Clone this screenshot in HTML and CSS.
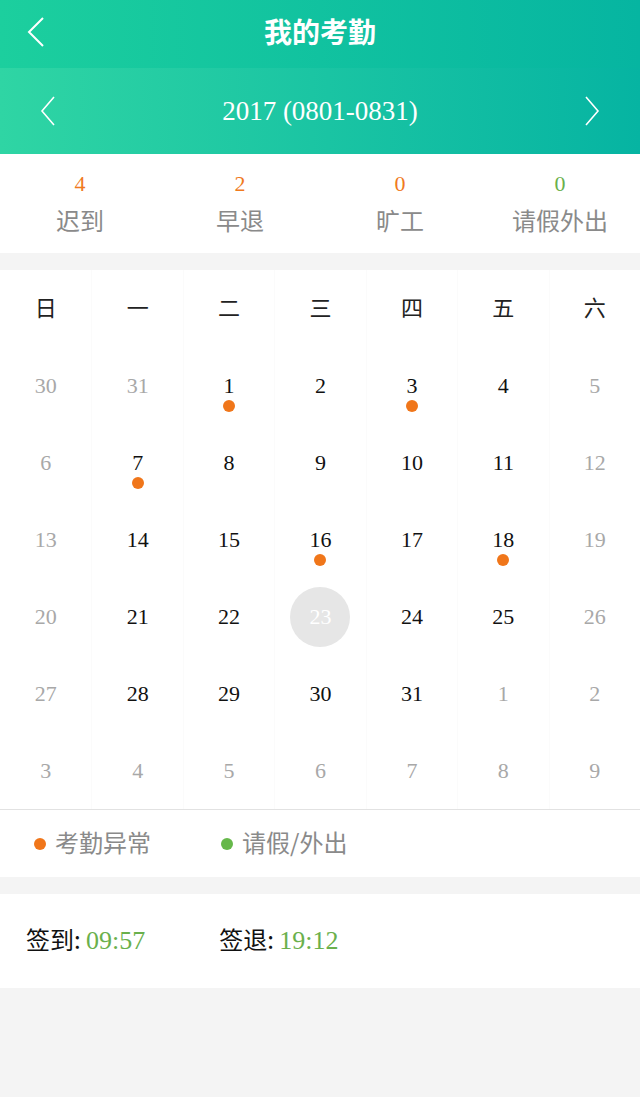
FILE: index.html
```html
<!DOCTYPE html>
<html lang="zh">
<head>
    <meta charset="UTF-8">
    <meta name="viewport" content="width=device-width, initial-scale=1.0">
    <title>我的考勤</title>
    <link rel="stylesheet" href="styles.css">
</head>
<body>
    <header class="topbar">
        <svg class="back" width="18" height="30" viewBox="0 0 18 30"><path d="M16 1 L2 15 L16 29" fill="none" stroke="#fff" stroke-width="2"/></svg>
        <h1>我的考勤</h1>
    </header>
    <div class="period">
        <svg class="arrow" width="16" height="30" viewBox="0 0 16 30"><path d="M14 1 L2 15 L14 29" fill="none" stroke="#fff" stroke-width="1.6"/></svg>
        <span>2017 (0801-0831)</span>
        <svg class="arrow" width="16" height="30" viewBox="0 0 16 30"><path d="M2 1 L14 15 L2 29" fill="none" stroke="#fff" stroke-width="1.6"/></svg>
    </div>

    <div class="stats">
        <div class="stat"><span class="num">4</span><span class="label">迟到</span></div>
        <div class="stat"><span class="num">2</span><span class="label">早退</span></div>
        <div class="stat"><span class="num">0</span><span class="label">旷工</span></div>
        <div class="stat"><span class="num green">0</span><span class="label">请假外出</span></div>
    </div>

    <div class="calendar">
        <div class="wk">日</div><div class="wk">一</div><div class="wk">二</div><div class="wk">三</div><div class="wk">四</div><div class="wk">五</div><div class="wk">六</div>

        <div class="day off">30</div><div class="day off">31</div><div class="day late">1</div><div class="day">2</div><div class="day late">3</div><div class="day">4</div><div class="day off">5</div>
        <div class="day off">6</div><div class="day late">7</div><div class="day">8</div><div class="day">9</div><div class="day">10</div><div class="day">11</div><div class="day off">12</div>
        <div class="day off">13</div><div class="day">14</div><div class="day">15</div><div class="day late">16</div><div class="day">17</div><div class="day late">18</div><div class="day off">19</div>
        <div class="day off">20</div><div class="day">21</div><div class="day">22</div><div class="day today"><span>23</span></div><div class="day">24</div><div class="day">25</div><div class="day off">26</div>
        <div class="day off">27</div><div class="day">28</div><div class="day">29</div><div class="day">30</div><div class="day">31</div><div class="day off">1</div><div class="day off">2</div>
        <div class="day off">3</div><div class="day off">4</div><div class="day off">5</div><div class="day off">6</div><div class="day off">7</div><div class="day off">8</div><div class="day off">9</div>
    </div>

    <div class="legend">
        <span class="item"><i class="dot orange"></i>考勤异常</span>
        <span class="item"><i class="dot greendot"></i>请假/外出</span>
    </div>

    <div class="sign">
        <span class="rec">签到: <em>09:57</em></span>
        <span class="rec">签退: <em>19:12</em></span>
    </div>
</body>
</html>
```

FILE: styles.css
```css
body { margin: 0; background: #f4f4f4; font-family: "Noto Sans CJK SC", sans-serif; }

.topbar { height: 68px; box-sizing: border-box; padding-bottom: 7px; display: flex; align-items: center; justify-content: center; position: relative; background: linear-gradient(90deg, #1ccf9e, #06b5a1); }
.topbar h1 { margin: 0; color: #fff; font-size: 28px; font-weight: bold; }
.topbar .back { position: absolute; left: 27px; top: 17px; }

.period { height: 86px; display: flex; align-items: center; justify-content: space-between; padding: 0 40px; background: linear-gradient(90deg, #2fd5a4, #06b4a2); color: #fff; font-family: "Liberation Serif", serif; font-size: 27px; }

.stats { display: flex; background: #fff; height: 99px; margin-bottom: 17px; }
.stat { flex: 1; display: flex; flex-direction: column; align-items: center; padding-top: 16px; }
.stat .num { font-family: "Liberation Serif", serif; font-size: 22px; color: #f07a1e; line-height: 28px; }
.stat .num.green { color: #6ab04c; }
.stat .label { font-size: 24px; color: #8a8a8a; line-height: 34px; margin-top: 5px; }

.calendar { display: grid; grid-template-columns: repeat(7, 1fr); grid-auto-rows: 77px; background: #fff; border-bottom: 1px solid #e2e2e2; }
.calendar > div { border-left: 1px solid #fbfbfb; }
.calendar > div:nth-child(7n+1) { border-left: none; }
.wk { display: flex; align-items: center; justify-content: center; padding-bottom: 6px; font-size: 22px; color: #222; }
.day { display: flex; align-items: center; justify-content: center; position: relative; font-family: "Liberation Serif", serif; font-size: 22px; color: #111; }
.day.off { color: #a8a8a8; }
.day.late::after { content: ""; position: absolute; left: 50%; top: 53px; width: 12px; height: 12px; margin-left: -6px; border-radius: 50%; background: #f0761a; }
.day.today span { width: 60px; height: 60px; border-radius: 50%; background: #e6e6e6; color: #fff; display: flex; align-items: center; justify-content: center; }

.legend { height: 67px; box-sizing: border-box; padding: 0 0 5px 34px; background: #fff; display: flex; align-items: center; gap: 70px; margin-bottom: 17px; font-size: 24px; color: #8a8a8a; }
.legend .item { display: flex; align-items: center; }
.dot { width: 12px; height: 12px; border-radius: 50%; margin-right: 9px; margin-top: 5px; }
.dot.orange { background: #f0761a; }
.dot.greendot { background: #66b84a; }

.sign { height: 94px; box-sizing: border-box; padding: 0 0 5px 26px; background: #fff; display: flex; align-items: center; gap: 74px; font-size: 24px; color: #111; }
.sign em { font-style: normal; font-family: "Liberation Serif", serif; font-size: 26px; color: #6ab04c; }
```
